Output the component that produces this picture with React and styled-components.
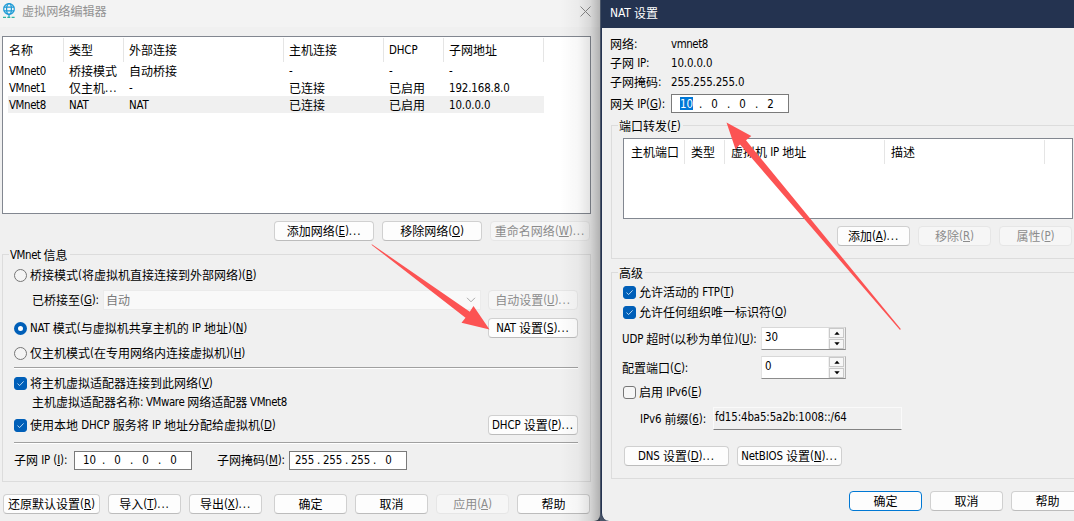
import { Fragment } from "react";
import styled, { createGlobalStyle, css } from "styled-components";

const GlobalStyle = createGlobalStyle`
  * {
    box-sizing: border-box;
  }
  body {
    margin: 0;
    overflow: hidden;
    background: #f0f0f0;
  }
`;

const Screen = styled.div`
  position: relative;
  width: 1074px;
  height: 521px;
  display: flex;
  overflow: hidden;
  background: #4a5568;
  color: #000;
  font-family: "Noto Sans CJK SC", sans-serif;
  font-size: 12px;
  line-height: 16px;
  white-space: nowrap;
`;

/* ---------- text ---------- */

const Latin = styled.span`
  font-family: "DejaVu Sans Condensed", "DejaVu Sans", sans-serif;
  font-stretch: condensed;
  font-size: 11.4px;
  line-height: 1;
  vertical-align: 1px;
  letter-spacing: ${(props) => (props.$tight ? "-0.4px" : "-0.12px")};
`;

const Dots = styled.span`
  letter-spacing: 0.9px;
`;

const Key = styled.u`
  text-underline-offset: 1px;
  text-decoration-thickness: 1px;
`;

const Label = styled.span`
  flex: none;
  display: block;
  height: 16px;
  width: ${(props) => (props.$w ? `${props.$w}px` : "auto")};
  margin-left: ${(props) => props.$ml || 0}px;
`;

const withDots = (s) =>
  s.endsWith("...") ? (
    <>
      {s.slice(0, -3)}
      <Dots>...</Dots>
    </>
  ) : (
    s
  );

// "&X" marks the shortcut letter, latin runs are set smaller than chinese ones
const Text = ({ children, tight, ...rest }) => (
  <Label {...rest}>
    {children.split(/([\x20-\x7e]+)/).map((run, i) => {
      if (i % 2 === 0) return <Fragment key={i}>{run}</Fragment>;
      const [before, after] = run.split("&");
      return (
        <Latin key={i} $tight={tight}>
          {withDots(before)}
          {after && <Key>{after[0]}</Key>}
          {after && withDots(after.slice(1))}
        </Latin>
      );
    })}
  </Label>
);

/* ---------- windows ---------- */

const EditorWindow = styled.div`
  position: relative;
  width: 600px;
  flex: none;
  display: flex;
  flex-direction: column;
  background: #f0f0f0;
  border-bottom-right-radius: 6px;
  &::after {
    content: "";
    position: absolute;
    top: 0;
    right: 0;
    bottom: 0;
    width: 40px;
    pointer-events: none;
    background: linear-gradient(
      to right,
      rgba(0, 0, 0, 0),
      rgba(0, 0, 0, 0.03) 45%,
      rgba(0, 0, 0, 0.11) 75%,
      rgba(0, 0, 0, 0.26)
    );
  }
`;

const NatWindow = styled.div`
  width: 473px;
  flex: none;
  margin-left: 1px;
  display: flex;
  flex-direction: column;
  background: #f0f0f0;
  border-left: 1px solid #243350;
  border-bottom-left-radius: 8px;
  overflow: hidden;
`;

const EditorTitle = styled.div`
  height: 27px;
  flex: none;
  display: flex;
  align-items: flex-start;
  padding: 3px 9px 0 2px;
  background: #f3f3f3;
  color: #929292;
  svg {
    flex: none;
  }
`;

const TitleText = styled.span`
  flex: 1;
  margin-left: 5px;
  font-size: 12.1px;
`;

const CloseIcon = styled.svg`
  margin-top: 3px;
`;

const NatTitle = styled.div`
  height: 28px;
  flex: none;
  padding: 5px 0 0 8px;
  background: #243350;
  color: #fff;
  ${Latin} {
    font-size: 12px;
  }
`;

/* ---------- lists ---------- */

const ListBox = styled.div`
  width: ${(props) => props.$w}px;
  height: ${(props) => props.$h}px;
  margin: ${(props) => props.$m};
  flex: none;
  background: #fff;
  border: 1px solid #828790;
`;

const HeaderRow = styled.div`
  display: flex;
  height: 24px;
  margin: 1px 0 0 1px;
`;

const HeaderCell = styled.div`
  width: ${(props) => props.$w}px;
  flex: none;
  padding: 4px 0 0 ${(props) => props.$pl || 6}px;
  border-right: 1px solid #e5e5e5;
`;

const ListRow = styled.div`
  display: flex;
  width: 536px;
  height: 17px;
  margin-left: 5px;
  background: ${(props) => (props.$selected ? "#f0f0f0" : "transparent")};
`;

const Cell = styled.div`
  width: ${(props) => props.$w}px;
  flex: none;
  padding: 1px 0 0 1px;
`;

/* ---------- controls ---------- */

const Button = styled.button`
  width: ${(props) => props.$w}px;
  height: 20px;
  flex: none;
  display: flex;
  align-items: center;
  justify-content: center;
  padding: 0;
  margin-left: ${(props) => props.$ml || 0}px;
  background: #fdfdfd;
  border: 1px solid #d0d0d0;
  border-bottom-color: #bcbcbc;
  border-radius: 4px;
  color: #000;
  font: inherit;
  ${(props) =>
    props.$primary &&
    css`
      border-color: #0078d4;
    `}
  &:disabled {
    background: #f6f6f6;
    border-color: #e6e6e6;
    color: #8c8c8c;
  }
`;

const Row = styled.div`
  display: flex;
  align-items: center;
  flex: none;
  height: ${(props) => props.$h || 20}px;
  margin-top: ${(props) => props.$mt || 0}px;
  padding-left: ${(props) => props.$pl || 0}px;
`;

const Group = styled.fieldset`
  width: ${(props) => props.$w}px;
  height: ${(props) => props.$h}px;
  flex: none;
  display: flex;
  flex-direction: column;
  margin: ${(props) => props.$m};
  padding: 0;
  border: 1px solid #dcdcdc;
`;

const Legend = styled.div`
  align-self: flex-start;
  flex: none;
  height: 16px;
  margin: -8px 0 0 6px;
  padding: 0 2px 0 1px;
  background: #f0f0f0;
`;

const Rule = styled.div`
  width: 564px;
  height: 2px;
  flex: none;
  margin: ${(props) => props.$mt}px 0 0 11px;
  border-top: 1px solid #a0a0a0;
  border-bottom: 1px solid #fff;
`;

const Radio = styled.span`
  width: 13px;
  height: 13px;
  flex: none;
  margin-right: 3px;
  border-radius: 50%;
  border: ${(props) => (props.$on ? "4px solid #005fb8" : "1px solid #767676")};
  background: ${(props) => (props.$on ? "#fff" : "#f4f4f4")};
`;

const Box = styled.span`
  width: 13px;
  height: 13px;
  flex: none;
  display: flex;
  align-items: center;
  justify-content: center;
  margin-right: 3px;
  border-radius: 3px;
  border: 1px solid ${(props) => (props.$on ? "#005fb8" : "#767676")};
  background: ${(props) => (props.$on ? "#005fb8" : "#f6f6f6")};
`;

const Checkbox = ({ on }) => (
  <Box $on={on}>
    {on && (
      <svg width="9" height="9" viewBox="0 0 9 9" fill="none" stroke="#b9d8f2">
        <path d="M1.5 4.6 L3.6 6.6 L7.6 2.4" />
      </svg>
    )}
  </Box>
);

const Combo = styled.div`
  width: 378px;
  height: 20px;
  flex: none;
  display: flex;
  align-items: center;
  justify-content: space-between;
  padding: 0 4px 0 2px;
  background: #f9f9f9;
  border: 1px solid #ebebeb;
  color: #7a7a7a;
`;

const IpBox = styled.div`
  width: 118px;
  height: 19px;
  flex: none;
  display: flex;
  align-items: center;
  padding-left: 2px;
  background: #fff;
  border: 1px solid #7a7a7a;
`;

const Octet = styled.span`
  width: 25px;
  display: flex;
  justify-content: center;
`;

const Dot = styled.span`
  width: 3px;
  display: flex;
  justify-content: center;
`;

const Selected = styled.span`
  height: 13px;
  display: flex;
  align-items: center;
  background: #0078d7;
  color: #fff;
`;

const IpField = ({ value, selected }) => (
  <IpBox>
    {value.split(".").map((part, i) => (
      <Fragment key={i}>
        {i > 0 && (
          <Dot>
            <Text>.</Text>
          </Dot>
        )}
        <Octet>
          {selected === i ? (
            <Selected>
              <Text>{part}</Text>
            </Selected>
          ) : (
            <Text>{part}</Text>
          )}
        </Octet>
      </Fragment>
    ))}
  </IpBox>
);

const SpinBox = styled.div`
  width: 85px;
  height: 23px;
  flex: none;
  display: flex;
  justify-content: space-between;
  padding-left: 3px;
  background: #fff;
  border: 1px solid #e3e3e3;
  border-top-color: #d8d8d8;
  border-right-color: #b4b4b4;
  border-bottom-color: #8c8c8c;
  ${Label} {
    margin-top: 1px;
  }
`;

const Arrows = styled.div`
  width: 17px;
  display: flex;
  flex-direction: column;
  gap: 1px;
  padding: 0 1px;
  background: #f0f0f0;
`;

const ArrowButton = styled.span`
  flex: 1;
  display: flex;
  align-items: center;
  justify-content: center;
  background: #f7f7f7;
  border: 1px solid #c9c9c9;
`;

const Spin = ({ value }) => (
  <SpinBox>
    <Text>{value}</Text>
    <Arrows>
      <ArrowButton>
        <svg width="6" height="4" viewBox="0 0 6 4">
          <path d="M0.3 3.7 L3 0.8 L5.7 3.7 Z" />
        </svg>
      </ArrowButton>
      <ArrowButton>
        <svg width="6" height="4" viewBox="0 0 6 4">
          <path d="M0.3 0.3 L3 3.2 L5.7 0.3 Z" />
        </svg>
      </ArrowButton>
    </Arrows>
  </SpinBox>
);

const PrefixField = styled.div`
  width: 189px;
  height: 23px;
  flex: none;
  padding: 1px 0 0 1px;
  border: 1px solid #fafafa;
  border-bottom-color: #828282;
`;

const Overlay = styled.svg`
  position: absolute;
  top: 0;
  left: 0;
  pointer-events: none;
`;

/* ---------- data ---------- */

const columns = [
  { title: "名称", w: 60 },
  { title: "类型", w: 60 },
  { title: "外部连接", w: 160 },
  { title: "主机连接", w: 100 },
  { title: "DHCP", w: 60 },
  { title: "子网地址", w: 100 },
];

const networks = [
  ["VMnet0", "桥接模式", "自动桥接", "-", "-", "-"],
  ["VMnet1", "仅主机...", "-", "已连接", "已启用", "192.168.8.0"],
  ["VMnet8", "NAT", "NAT", "已连接", "已启用", "10.0.0.0"],
];

const GlobeIcon = () => (
  <svg width="15" height="16" viewBox="0 0 15 16" fill="none" stroke="#1c9ad6" strokeWidth="1.2">
    <circle cx="7" cy="6" r="5.3" />
    <ellipse cx="7" cy="6" rx="2.4" ry="5.3" />
    <path d="M1.7 4.2 H12.3 M1.7 7.8 H12.3" />
    <path d="M7 11.5 V14" />
    <path d="M1 14.4 H13" stroke="#2fb5a0" strokeDasharray="3 1.3" />
  </svg>
);

const Editor = () => (
  <EditorWindow>
    <EditorTitle>
      <GlobeIcon />
      <TitleText>虚拟网络编辑器</TitleText>
      <CloseIcon width="11" height="11" viewBox="0 0 11 11" stroke="#8a8a8a">
        <path d="M0.5 0.5 L10.5 10.5 M10.5 0.5 L0.5 10.5" />
      </CloseIcon>
    </EditorTitle>
    <ListBox $w={589} $h={178} $m="9px 0 0 2px">
      <HeaderRow>
        {columns.map((c) => (
          <HeaderCell key={c.title} $w={c.w} $pl={5}>
            <Text>{c.title}</Text>
          </HeaderCell>
        ))}
      </HeaderRow>
      {networks.map((cells, i) => (
        <ListRow key={cells[0]} $selected={i === 2}>
          {cells.map((cell, j) => (
            <Cell key={j} $w={columns[j].w}>
              <Text tight={j === 0}>{cell}</Text>
            </Cell>
          ))}
        </ListRow>
      ))}
    </ListBox>
    <Row $mt={7} $pl={274}>
      <Button $w={100}>
        <Text>添加网络(&E)...</Text>
      </Button>
      <Button $w={100} $ml={8}>
        <Text>移除网络(&O)</Text>
      </Button>
      <Button $w={100} $ml={8} disabled>
        <Text>重命名网络(&W)...</Text>
      </Button>
    </Row>
    <Group $w={589} $h={228} $m="13px 0 0 2px">
      <Legend>
        <Text tight>VMnet 信息</Text>
      </Legend>
      <Row $mt={2} $pl={11}>
        <Radio />
        <Text>桥接模式(将虚拟机直接连接到外部网络)(&B)</Text>
      </Row>
      <Row $mt={5} $pl={29}>
        <Text $w={71}>已桥接至(&G):</Text>
        <Combo>
          <Text>自动</Text>
          <svg width="10" height="6" viewBox="0 0 10 6" fill="none" stroke="#a8a8a8">
            <path d="M1 0.8 L5 4.8 L9 0.8" />
          </svg>
        </Combo>
        <Button $w={90} $ml={7} disabled>
          <Text>自动设置(&U)...</Text>
        </Button>
      </Row>
      <Row $mt={8} $pl={11}>
        <Radio $on />
        <Text $w={458}>NAT 模式(与虚拟机共享主机的 IP 地址)(&N)</Text>
        <Button $w={90}>
          <Text>NAT 设置(&S)...</Text>
        </Button>
      </Row>
      <Row $mt={5} $pl={11}>
        <Radio />
        <Text>仅主机模式(在专用网络内连接虚拟机)(&H)</Text>
      </Row>
      <Rule $mt={4} />
      <Row $mt={4} $pl={11}>
        <Checkbox on />
        <Text>将主机虚拟适配器连接到此网络(&V)</Text>
      </Row>
      <Row $pl={29} $h={18}>
        <Text tight>主机虚拟适配器名称: VMware 网络适配器 VMnet8</Text>
      </Row>
      <Row $mt={4} $pl={11}>
        <Checkbox on />
        <Text $w={458}>使用本地 DHCP 服务将 IP 地址分配给虚拟机(&D)</Text>
        <Button $w={90}>
          <Text>DHCP 设置(&P)...</Text>
        </Button>
      </Row>
      <Rule $mt={7} />
      <Row $mt={6} $pl={11}>
        <Text $w={60}>子网 IP (&I):</Text>
        <IpField value="10.0.0.0" />
        <Text $w={72} $ml={25}>
          子网掩码(&M):
        </Text>
        <IpField value="255.255.255.0" />
      </Row>
    </Group>
    <Row $mt={12} $pl={3}>
      <Button $w={97}>
        <Text>还原默认设置(&R)</Text>
      </Button>
      <Button $w={73} $ml={8}>
        <Text>导入(&T)...</Text>
      </Button>
      <Button $w={73} $ml={8}>
        <Text>导出(&X)...</Text>
      </Button>
      <Button $w={73} $ml={12}>
        <Text>确定</Text>
      </Button>
      <Button $w={73} $ml={8}>
        <Text>取消</Text>
      </Button>
      <Button $w={73} $ml={8} disabled>
        <Text>应用(&A)</Text>
      </Button>
      <Button $w={73} $ml={8}>
        <Text>帮助</Text>
      </Button>
    </Row>
  </EditorWindow>
);

const NatSettings = () => (
  <NatWindow>
    <NatTitle>
      <Text>NAT 设置</Text>
    </NatTitle>
    <Row $mt={6} $h={19} $pl={8}>
      <Text $w={61}>网络:</Text>
      <Text tight>vmnet8</Text>
    </Row>
    <Row $h={19} $pl={8}>
      <Text $w={61}>子网 IP:</Text>
      <Text>10.0.0.0</Text>
    </Row>
    <Row $h={19} $pl={8}>
      <Text $w={61}>子网掩码:</Text>
      <Text>255.255.255.0</Text>
    </Row>
    <Row $mt={3} $h={19} $pl={8}>
      <Text $w={61}>网关 IP(&G):</Text>
      <IpField value="10.0.0.2" selected={0} />
    </Row>
    <Group $w={480} $h={134} $m="12px 0 0 9px">
      <Legend>
        <Text>端口转发(&F)</Text>
      </Legend>
      <ListBox $w={450} $h={81} $m="4px 0 0 11px">
        <HeaderRow>
          <HeaderCell $w={60}>
            <Text>主机端口</Text>
          </HeaderCell>
          <HeaderCell $w={40}>
            <Text>类型</Text>
          </HeaderCell>
          <HeaderCell $w={160}>
            <Text>虚拟机 IP 地址</Text>
          </HeaderCell>
          <HeaderCell $w={160}>
            <Text>描述</Text>
          </HeaderCell>
        </HeaderRow>
      </ListBox>
      <Row $mt={7} $pl={225}>
        <Button $w={73}>
          <Text>添加(&A)...</Text>
        </Button>
        <Button $w={73} $ml={8} disabled>
          <Text>移除(&R)</Text>
        </Button>
        <Button $w={73} $ml={8} disabled>
          <Text>属性(&P)</Text>
        </Button>
      </Row>
    </Group>
    <Group $w={480} $h={207} $m="13px 0 0 9px">
      <Legend>
        <Text>高级</Text>
      </Legend>
      <Row $mt={1} $pl={11}>
        <Checkbox on />
        <Text>允许活动的 FTP(&T)</Text>
      </Row>
      <Row $pl={11}>
        <Checkbox on />
        <Text>允许任何组织唯一标识符(&O)</Text>
      </Row>
      <Row $mt={5} $h={23} $pl={10}>
        <Text $w={139}>UDP 超时(以秒为单位)(&U):</Text>
        <Spin value="30" />
      </Row>
      <Row $mt={6} $h={23} $pl={10}>
        <Text $w={139}>配置端口(&C):</Text>
        <Spin value="0" />
      </Row>
      <Row $mt={3} $pl={11}>
        <Checkbox />
        <Text>启用 IPv6(&E)</Text>
      </Row>
      <Row $mt={5} $h={23} $pl={28}>
        <Text $w={73}>IPv6 前缀(&6):</Text>
        <PrefixField>
          <Text>fd15:4ba5:5a2b:1008::/64</Text>
        </PrefixField>
      </Row>
      <Row $mt={16} $pl={12}>
        <Button $w={105}>
          <Text>DNS 设置(&D)...</Text>
        </Button>
        <Button $w={105} $ml={8}>
          <Text>NetBIOS 设置(&N)...</Text>
        </Button>
      </Row>
    </Group>
    <Row $mt={12} $pl={247}>
      <Button $w={73} $primary>
        <Text>确定</Text>
      </Button>
      <Button $w={73} $ml={8}>
        <Text>取消</Text>
      </Button>
      <Button $w={73} $ml={8}>
        <Text>帮助</Text>
      </Button>
    </Row>
  </NatWindow>
);

const App = () => {
  return (
    <Screen>
      <GlobalStyle />
      <Editor />
      <NatSettings />
      <Overlay width="1074" height="521" viewBox="0 0 1074 521" fill="#fc5353">
        <path d="M371.5 244 L372 245.2 L465.5 317.7 L461.5 322.7 L489.5 329.5 L473.5 306 L469.8 311.7 Z" />
        <path d="M726.5 122.5 L751.3 136 L746 140.3 L900.8 329 L900 330 L740 144.5 L735.5 149.3 Z" />
      </Overlay>
    </Screen>
  );
};

export default App;
